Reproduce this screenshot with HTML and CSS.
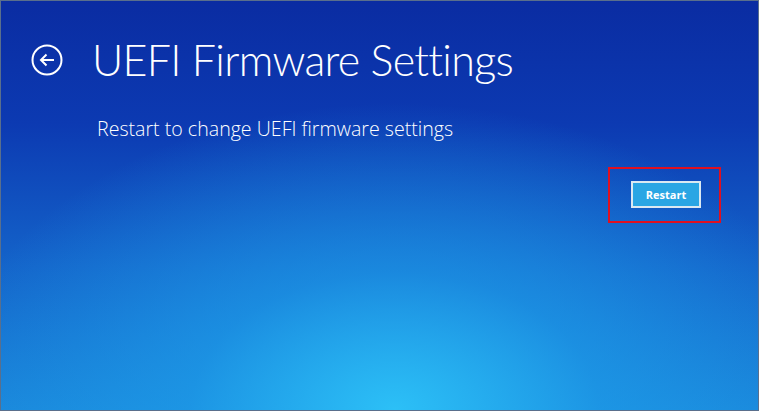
FILE: index.html
```html
<!DOCTYPE html>
<html lang="en">
<head>
    <meta charset="UTF-8">
    <title>UEFI Firmware Settings</title>
    <link rel="stylesheet" href="styles.css">
</head>
<body>

<div class="screen">
    <div class="header">
        <button class="back-btn" aria-label="Back">
            <svg width="32" height="32" viewBox="0 0 32 32">
                <circle cx="16" cy="16" r="14.5" fill="none" stroke="#fff" stroke-width="2"/>
                <path d="M23 16 H10 M15.5 10.5 L10 16 L15.5 21.5" fill="none" stroke="#fff" stroke-width="2"/>
            </svg>
        </button>
        <h1 class="title">UEFI Firmware Settings</h1>
    </div>

    <div class="content">
        <p class="description">Restart to change UEFI firmware settings</p>
        <div class="actions">
            <div class="highlight">
                <button class="restart-btn">Restart</button>
            </div>
        </div>
    </div>
</div>

</body>
</html>
```

FILE: styles.css
```css
html, body {
    margin: 0;
    height: 100%;
}

body {
    font-family: "Open Sans", "Noto Sans", sans-serif;
    color: white;
}

.screen {
    box-sizing: border-box;
    height: 100%;
    border: 1px solid #5a6f8c;
    background:
        radial-gradient(ellipse 60% 75% at 52% 100%, rgba(45, 195, 248, 0.95) 0%, rgba(30, 160, 235, 0.6) 45%, rgba(20, 120, 220, 0) 100%),
        linear-gradient(180deg, #0a2ca2 0%, #0c3ab2 30%, #1464ca 65%, #1a86da 100%);
    padding: 0 37px 0 30px;
}

.header {
    display: flex;
    align-items: center;
    padding-top: 27px;
}

.back-btn {
    background: none;
    border: none;
    padding: 0;
    width: 32px;
    height: 32px;
    margin-right: 29px;
    cursor: pointer;
}

.back-btn svg {
    display: block;
}

.title {
    margin: 0;
    font-family: "Lato", "Open Sans", sans-serif;
    font-size: 43px;
    font-weight: 300;
    letter-spacing: -0.7px;
    line-height: 64px;
}

.content {
    padding-left: 66px;
}

.description {
    margin: 25px 0 0;
    font-size: 19.6px;
    font-weight: 300;
    line-height: 24px;
}

.actions {
    display: flex;
    justify-content: flex-end;
    margin-top: 26px;
}

.highlight {
    border: 2px solid #e01020;
    padding: 12px 18px 13px 21px;
}

.restart-btn {
    display: block;
    width: 70px;
    height: 27px;
    background-color: #2aa6e4;
    border: 2px solid #dbe9f2;
    color: white;
    font-family: "Open Sans", sans-serif;
    font-size: 11px;
    font-weight: 700;
    padding: 0;
    cursor: pointer;
}
```
